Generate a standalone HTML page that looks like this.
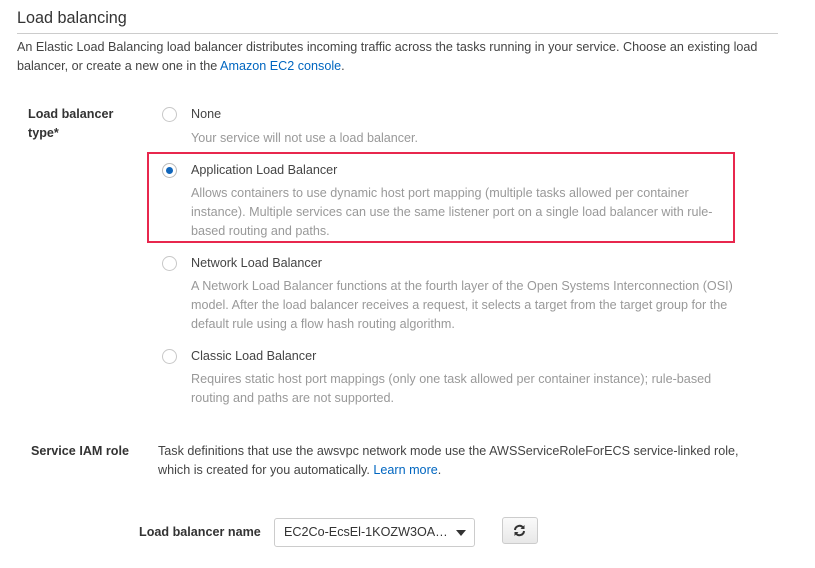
<!DOCTYPE html><html><head><style>
body{margin:0;width:815px;height:568px;background:#fff;font-family:"Liberation Sans",sans-serif;font-size:12.6px;color:#444;position:relative;overflow:hidden}
.a{position:absolute;white-space:nowrap;line-height:19px}
.g{color:#999}
.b{font-weight:bold;color:#333}
a{color:#0066c0;text-decoration:none}
.r{position:absolute;width:15px;height:15px;border:1px solid #c8c8c8;border-radius:50%;background:#fff;box-sizing:border-box}
</style></head><body>
<div class="a" style="left:17px;top:9px;font-size:16.2px;color:#333">Load balancing</div>
<div style="position:absolute;left:17px;top:33px;width:761px;height:1px;background:#ccc"></div>
<div class="a" style="left:17px;top:38px">An Elastic Load Balancing load balancer distributes incoming traffic across the tasks running in your service. Choose an existing load<br>balancer, or create a new one in the <a>Amazon EC2 console</a>.</div>
<div class="a b" style="left:28px;top:105px">Load balancer<br>type*</div>
<div class="r" style="left:162px;top:107px"></div>
<div class="a" style="left:191px;top:105px">None</div>
<div class="a g" style="left:191px;top:129px">Your service will not use a load balancer.</div>
<div style="position:absolute;left:147px;top:152px;width:588px;height:91px;border:2px solid #e8274d;box-sizing:border-box"></div>
<div class="r" style="left:162px;top:163px;border-color:#bbb"><div style="position:absolute;left:3px;top:3px;width:7px;height:7px;border-radius:50%;background:#1166bb"></div></div>
<div class="a" style="left:191px;top:161px">Application Load Balancer</div>
<div class="a g" style="left:191px;top:184px">Allows containers to use dynamic host port mapping (multiple tasks allowed per container<br>instance). Multiple services can use the same listener port on a single load balancer with rule-<br>based routing and paths.</div>
<div class="r" style="left:162px;top:256px"></div>
<div class="a" style="left:191px;top:254px">Network Load Balancer</div>
<div class="a g" style="left:191px;top:277px">A Network Load Balancer functions at the fourth layer of the Open Systems Interconnection (OSI)<br>model. After the load balancer receives a request, it selects a target from the target group for the<br>default rule using a flow hash routing algorithm.</div>
<div class="r" style="left:162px;top:349px"></div>
<div class="a" style="left:191px;top:347px">Classic Load Balancer</div>
<div class="a g" style="left:191px;top:370px">Requires static host port mappings (only one task allowed per container instance); rule-based<br>routing and paths are not supported.</div>
<div class="a b" style="left:31px;top:442px">Service IAM role</div>
<div class="a" style="left:158px;top:442px">Task definitions that use the awsvpc network mode use the AWSServiceRoleForECS service-linked role,<br>which is created for you automatically. <a>Learn more</a>.</div>
<div class="a b" style="left:139px;top:523px">Load balancer name</div>
<div style="position:absolute;left:274px;top:518px;width:201px;height:29px;border:1px solid #ccc;border-radius:3px;box-sizing:border-box"></div>
<div class="a" style="left:284px;top:523px;color:#333">EC2Co-EcsEl-1KOZW3OA…</div>
<div style="position:absolute;left:456px;top:530px;border-left:5px solid transparent;border-right:5px solid transparent;border-top:6px solid #333"></div>
<div style="position:absolute;left:502px;top:517px;width:36px;height:27px;border:1px solid #ccc;border-radius:3px;box-sizing:border-box;background:linear-gradient(#fafafa,#e8e8e8)"></div>
<svg style="position:absolute;left:513px;top:524px" width="13" height="13" viewBox="0 0 13 13"><path d="M2 6A4.5 4.5 0 0 1 10 3.5M11 7A4.5 4.5 0 0 1 3 9.5" stroke="#333" stroke-width="2" fill="none"/><path d="M11.5 1v4h-4zM1.5 12V8h4z" fill="#333"/></svg>
</body></html>
